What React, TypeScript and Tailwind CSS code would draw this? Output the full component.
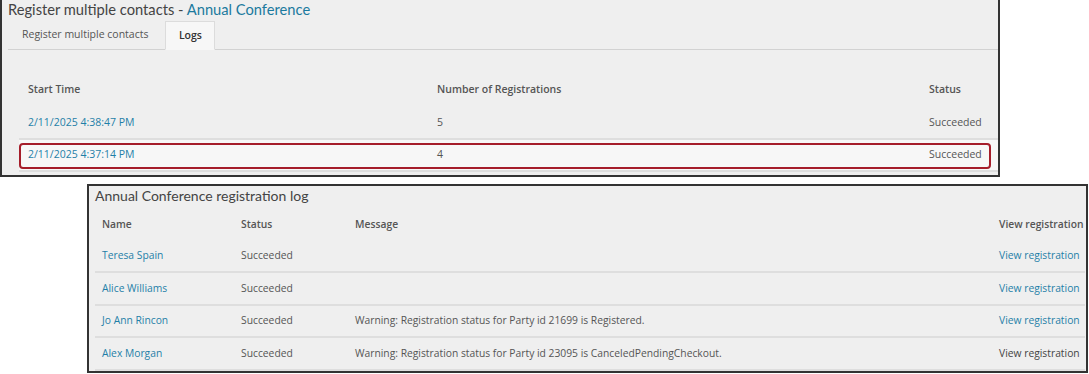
import React from 'react';

const link = 'text-[#1f7fa8]';
const body = 'text-[#555]';

const logs = [
  { time: '2/11/2025 4:38:47 PM', count: 5, status: 'Succeeded', selected: false },
  { time: '2/11/2025 4:37:14 PM', count: 4, status: 'Succeeded', selected: true },
];

const regs = [
  { name: 'Teresa Spain', status: 'Succeeded', message: '', visited: false },
  { name: 'Alice Williams', status: 'Succeeded', message: '', visited: false },
  { name: 'Jo Ann Rincon', status: 'Succeeded', message: 'Warning: Registration status for Party id 21699 is Registered.', visited: false },
  { name: 'Alex Morgan', status: 'Succeeded', message: 'Warning: Registration status for Party id 23095 is CanceledPendingCheckout.', visited: true },
];

const RunsPanel: React.FC = () => (
  <div className="w-[1000px] h-[177px] bg-[#efefef] border-2 border-[#333] border-t-0 box-border">
    {/* Title */}
    <div className="pl-[6px] h-[21px] text-[14.7px] leading-[18px] text-[#444] font-['Lato',sans-serif] whitespace-nowrap">
      Register multiple contacts - <span className="text-[#1b7a9e]">Annual Conference</span>
    </div>

    {/* Tabs */}
    <div className="ml-[6px] flex items-end h-[29px] border-b border-[#d2d2d2] text-[10.5px] font-['Open_Sans',sans-serif]">
      <div className="px-[14px] h-[28px] flex items-center text-[#555] whitespace-nowrap">Register multiple contacts</div>
      <div className="ml-[3px] w-[50px] h-[29px] -mb-px flex items-center justify-center bg-[#f7f7f7] border border-[#dcdcdc] border-b-[#f7f7f7] font-semibold text-[#333]">
        Logs
      </div>
    </div>

    {/* Table */}
    <div className="relative ml-[17px] mt-[28px] font-['Open_Sans',sans-serif] text-[10.5px]">
      <div className="grid grid-cols-[409px_492px_1fr] pl-[9px] h-[24px] items-center font-semibold text-[#555]">
        <div>Start Time</div>
        <div>Number of Registrations</div>
        <div>Status</div>
      </div>
      <div className="h-[5px]" />
      {logs.map((r) => (
        <div
          key={r.time}
          className={`relative grid grid-cols-[409px_492px_1fr] pl-[9px] items-center border-b-2 border-[#dedede] ${
            r.selected ? 'h-[32px] bg-[#f7f7f7]' : 'h-[33px]'
          }`}
        >
          <div className={link}>{r.time}</div>
          <div className={body}>{r.count}</div>
          <div className={body}>{r.status}</div>
          {r.selected && (
            <div className="absolute left-0 top-[3px] w-[972px] h-[26px] border-2 border-[#a51d2a] rounded-[4px]" />
          )}
        </div>
      ))}
    </div>
  </div>
);

const DetailPanel: React.FC = () => (
  <div className="ml-[87px] mt-[7px] w-[1001px] h-[189px] bg-[#efefef] border-2 border-[#333] box-border">
    <div className="pl-[6px] pt-[1px] h-[23px] text-[14px] leading-[18px] text-[#444] font-['Lato',sans-serif]">
      Annual Conference registration log
    </div>
    <div className="ml-[6px] mr-[1px] font-['Open_Sans',sans-serif] text-[10.3px]">
      <div className="grid grid-cols-[139px_114px_644px_1fr] pl-[7px] h-[32px] items-center font-semibold text-[#555] whitespace-nowrap">
        <div>Name</div>
        <div>Status</div>
        <div>Message</div>
        <div>View registration</div>
      </div>
      {regs.map((r) => (
        <div
          key={r.name}
          className="grid grid-cols-[139px_114px_644px_1fr] pl-[7px] h-[32.4px] items-center border-b-2 border-[#dedede] whitespace-nowrap"
        >
          <div className={link}>{r.name}</div>
          <div className={body}>{r.status}</div>
          <div className={body}>{r.message}</div>
          <div className={r.visited ? 'text-[#444]' : link}>View registration</div>
        </div>
      ))}
    </div>
  </div>
);

export default function App() {
  return (
    <div className="w-[1089px] h-[374px] bg-white overflow-hidden">
      <RunsPanel />
      <DetailPanel />
    </div>
  );
}
